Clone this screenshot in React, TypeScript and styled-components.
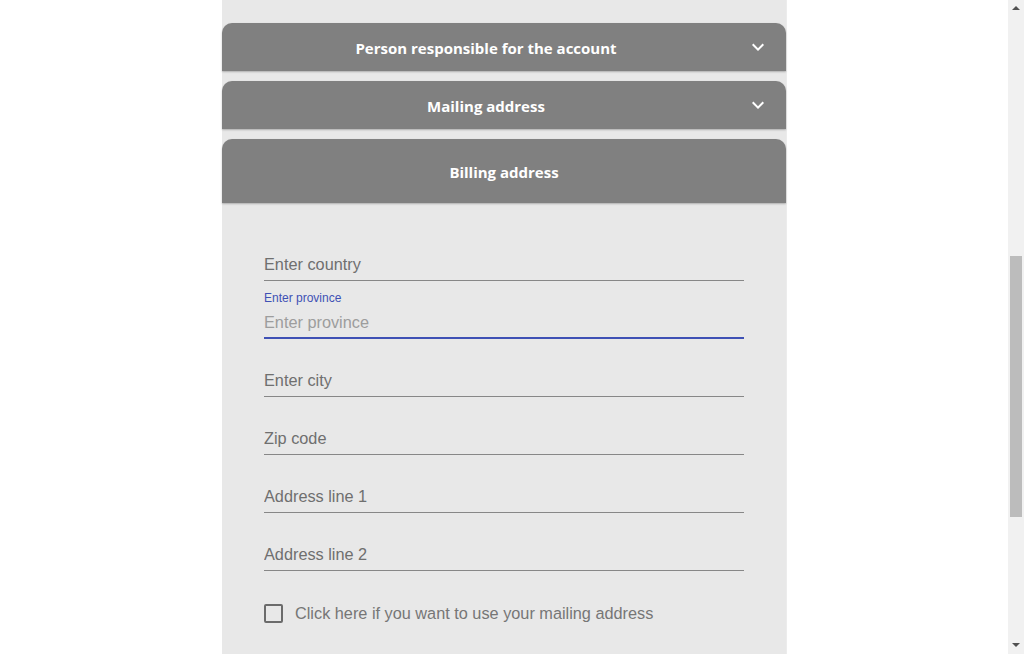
import React, { FC } from 'react';
import styled, { createGlobalStyle } from 'styled-components';

const GlobalStyle = createGlobalStyle`
  html, body {
    margin: 0;
    padding: 0;
    height: 100%;
    overflow: hidden;
    background: #fff;
  }
  #root {
    height: 100%;
  }
`;

//Page shell
const Page = styled.div`
  display: flex;
  height: 100vh;
  width: 100vw;
`;
const Main = styled.div`
  flex: 1;
  display: flex;
  justify-content: center;
  overflow: hidden;
`;
const Panel = styled.div`
  width: 564px;
  background-color: #e8e8e8;
  padding-top: 23px;
  display: flex;
  flex-direction: column;
  gap: 10px;
  box-shadow: 1px 0 0 #ececec;
`;

//Fake browser scrollbar
const ScrollTrack = styled.div`
  width: 16px;
  background-color: #f1f1f1;
  display: flex;
  flex-direction: column;
  align-items: center;
  justify-content: space-between;
  padding: 6px 0 7px;
  box-sizing: border-box;
`;
const ScrollThumb = styled.div`
  width: 12px;
  height: 261px;
  background-color: #bcbcbc;
  margin-top: 246px;
  margin-bottom: auto;
`;
const Arrow = styled.div<{ $down?: boolean }>`
  width: 0;
  height: 0;
  border-left: 4px solid transparent;
  border-right: 4px solid transparent;
  ${(p) =>
    p.$down
      ? 'border-top: 4px solid #505050;'
      : 'border-bottom: 4px solid #505050;'}
`;

//Accordion
const Section = styled.div`
  display: flex;
  flex-direction: column;
`;
const Summary = styled.div<{ $open?: boolean }>`
  height: ${(p) => (p.$open ? '64px' : '48px')};
  background-color: #808080;
  border-radius: 10px 10px 0 0;
  box-shadow: 0 1px 2px rgba(0, 0, 0, 0.25);
  display: flex;
  align-items: center;
  padding: 0 16px;
  position: relative;
  z-index: 1;
`;
const SummaryTitle = styled.div`
  flex: 1;
  text-align: center;
  color: #fff;
  font-family: 'Open Sans', sans-serif;
  font-weight: 700;
  font-size: 15px;
  padding-top: 2px;
`;
const ExpandIcon = styled.svg`
  width: 24px;
  height: 24px;
  margin-left: 12px;
  fill: #fff;
`;
const Details = styled.div`
  display: flex;
  flex-direction: column;
  gap: 10px;
  padding: 30px 42px;
`;

//Text field
const Field = styled.div`
  display: flex;
  flex-direction: column;
  width: 480px;
`;
const SmallLabel = styled.label`
  height: 16px;
  font-family: 'Liberation Sans', Arial, sans-serif;
  font-size: 12px;
  line-height: 14px;
  color: #3f51b5;
`;
const InputBox = styled.div<{ $focused?: boolean }>`
  height: 32px;
  box-sizing: border-box;
  padding-top: 6px;
  border-bottom: ${(p) =>
    p.$focused ? '2px solid #3f51b5' : '1px solid #878787'};
`;
const Input = styled.input<{ $focused?: boolean }>`
  display: block;
  width: 100%;
  height: 19px;
  padding: 0;
  margin: 0;
  border: none;
  outline: none;
  background: transparent;
  font-family: 'Liberation Sans', Arial, sans-serif;
  font-size: 16.3px;
  line-height: 19px;
  color: #333;
  caret-color: #000;
  &::placeholder {
    color: ${(p) => (p.$focused ? '#9d9d9d' : '#6f6f6f')};
    opacity: 1;
  }
`;

//Checkbox row
const CheckRow = styled.label`
  display: flex;
  align-items: center;
  height: 42px;
  margin-top: 11px;
  gap: 12px;
  font-family: 'Liberation Sans', Arial, sans-serif;
  font-size: 16.3px;
  color: #767676;
`;
const CheckBox = styled.span`
  width: 19px;
  height: 19px;
  box-sizing: border-box;
  border: 2px solid #6b6b6b;
  border-radius: 2px;
`;

const Chevron: FC = () => (
  <ExpandIcon viewBox="0 0 24 24">
    <path d="M16.59 8.59L12 13.17 7.41 8.59 6 10l6 6 6-6z" />
  </ExpandIcon>
);

const TextField: FC<{ label: string; focused?: boolean }> = ({ label, focused }) => (
  <Field>
    <SmallLabel>{focused ? label : ''}</SmallLabel>
    <InputBox $focused={focused}>
      <Input placeholder={label} $focused={focused} autoFocus={focused} />
    </InputBox>
  </Field>
);

const App: FC = () => {
  const fields = [
    'Enter country',
    'Enter province',
    'Enter city',
    'Zip code',
    'Address line 1',
    'Address line 2',
  ];
  return (
    <>
      <GlobalStyle />
      <Page>
        <Main>
          <Panel>
            <Section>
              <Summary>
                <SummaryTitle>Person responsible for the account</SummaryTitle>
                <Chevron />
              </Summary>
            </Section>
            <Section>
              <Summary>
                <SummaryTitle>Mailing address</SummaryTitle>
                <Chevron />
              </Summary>
            </Section>
            <Section>
              <Summary $open>
                <SummaryTitle>Billing address</SummaryTitle>
              </Summary>
              <Details>
                {fields.map((f) => (
                  <TextField key={f} label={f} focused={f === 'Enter province'} />
                ))}
                <CheckRow>
                  <CheckBox />
                  Click here if you want to use your mailing address
                </CheckRow>
              </Details>
            </Section>
          </Panel>
        </Main>
        <ScrollTrack>
          <Arrow />
          <ScrollThumb />
          <Arrow $down />
        </ScrollTrack>
      </Page>
    </>
  );
};

export default App;
